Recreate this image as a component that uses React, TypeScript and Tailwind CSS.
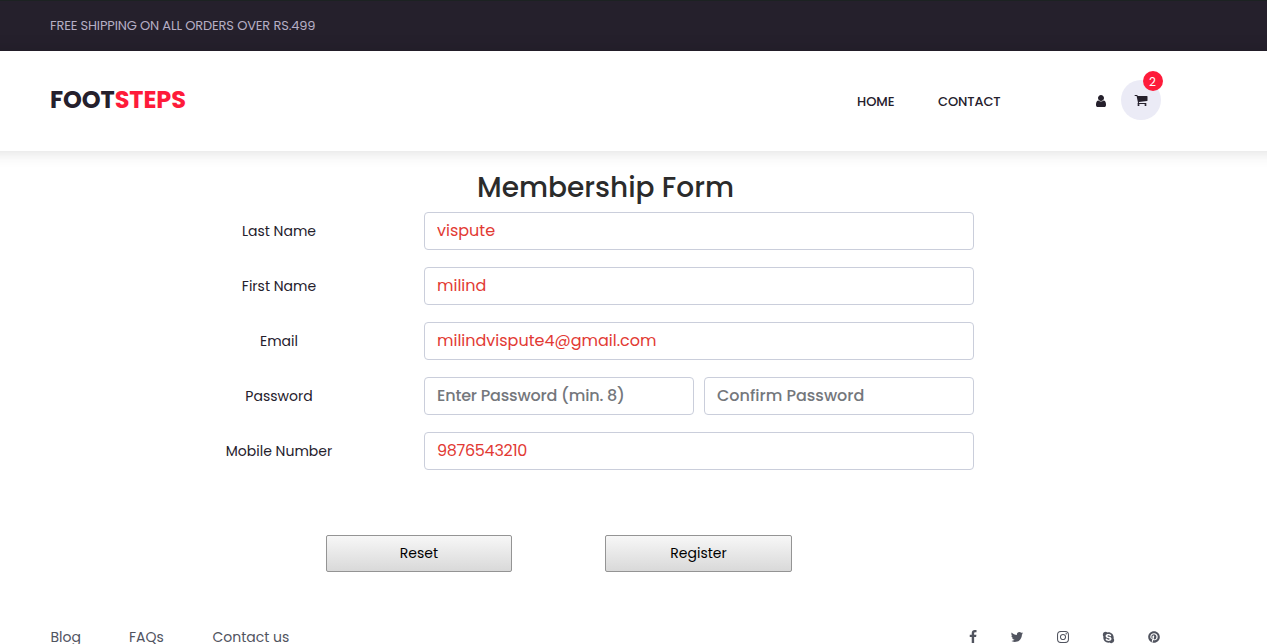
import React from "react";
import { FaPinterest, FaSkype } from "react-icons/fa";

type GlyphProps = { d: string; box?: string; className: string };

function Glyph({ d, box = "0 0 1792 1792", className }: GlyphProps) {
  return (
    <svg viewBox={box} fill="currentColor" className={className} aria-hidden="true">
      <path d={d} />
    </svg>
  );
}

const USER =
  "M1280 1399q0 109-62.5 187t-150.5 78h-854q-88 0-150.5-78t-62.5-187q0-85 8.5-160.5t31.5-152 58.5-131 94-89 134.5-34.5q131 128 313 128t313-128q76 0 134.5 34.5t94 89 58.5 131 31.5 152 8.5 160.5zm-256-887q0 159-112.5 271.5t-271.5 112.5-271.5-112.5-112.5-271.5 112.5-271.5 271.5-112.5 271.5 112.5 112.5 271.5z";
const CART =
  "M704 1536q0 52-38 90t-90 38-90-38-38-90 38-90 90-38 90 38 38 90zm896 0q0 52-38 90t-90 38-90-38-38-90 38-90 90-38 90 38 38 90zm128-1088v512q0 24-16.5 42.5t-40.5 21.5l-1044 122q13 60 13 70 0 16-24 64h920q26 0 45 19t19 45-19 45-45 19h-1024q-26 0-45-19t-19-45q0-11 8-31.5t16-36 21.5-40 15.5-29.5l-177-823h-204q-26 0-45-19t-19-45 19-45 45-19h256q16 0 28.5 6.5t19.5 15.5 13 24.5 8 26 5.5 29.5 4.5 26h1201q26 0 45 19t19 45z";
const FACEBOOK =
  "M1343 12v264h-157q-86 0-116 36t-30 108v189h293l-39 296h-254v759h-306v-759h-255v-296h255v-218q0-186 104-288.5t277-102.5q147 0 228 12z";
const TWITTER =
  "M1684 408q-67 98-162 167 1 14 1 42 0 130-38 259.5t-115.5 248.5-184.5 210.5-258 146-323 54.5q-271 0-496-145 35 4 78 4 225 0 401-138-105-2-188-64.5t-114-159.5q33 5 61 5 43 0 85-11-112-23-185.5-111.5t-73.5-205.5v-4q68 38 146 41-66-44-105-115t-39-154q0-88 44-163 121 149 294.5 238.5t371.5 99.5q-8-38-8-74 0-134 94.5-228.5t228.5-94.5q140 0 236 102 109-21 205-78-37 115-142 178 93-10 186-50z";
const INSTAGRAM =
  "M1152 896q0-106-75-181t-181-75-181 75-75 181 75 181 181 75 181-75 75-181zm138 0q0 164-115 279t-279 115-279-115-115-279 115-279 279-115 279 115 115 279zm108-410q0 38-27 65t-65 27-65-27-27-65 27-65 65-27 65 27 27 65zm-502-220q-7 0-76.5-.5t-105.5 0-96.5 3-103 10-71.5 18.5q-50 20-88 58t-58 88q-11 29-18.5 71.5t-10 103-3 96.5 0 105.5.5 76.5-.5 76.5 0 105.5 3 96.5 10 103 18.5 71.5q20 50 58 88t88 58q29 11 71.5 18.5t103 10 96.5 3 105.5 0 76.5-.5 76.5.5 105.5 0 96.5-3 103-10 71.5-18.5q50-20 88-58t58-88q11-29 18.5-71.5t10-103 3-96.5 0-105.5-.5-76.5.5-76.5 0-105.5-3-96.5-10-103-18.5-71.5q-20-50-58-88t-88-58q-29-11-71.5-18.5t-103-10-96.5-3-105.5 0-76.5.5zm768 630q0 229-5 317-10 208-124 322t-322 124q-88 5-317 5t-317-5q-208-10-322-124t-124-322q-5-88-5-317t5-317q10-208 124-322t322-124q88-5 317-5t317 5q208 10 322 124t124 322q5 88 5 317z";

const INPUT =
  "h-[38px] min-w-0 flex-1 rounded border border-[#cacedb] bg-white px-3 pb-[2px] text-base text-[#e23a34] outline-none placeholder:font-medium placeholder:text-[#74777c] placeholder:opacity-100";

type Field = { value?: string; placeholder?: string; type?: string; tracking?: string };
type Row = { label: string; fields: Field[] };

const ROWS: Row[] = [
  { label: "Last Name", fields: [{ value: "vispute" }] },
  { label: "First Name", fields: [{ value: "milind" }] },
  { label: "Email", fields: [{ value: "milindvispute4@gmail.com" }] },
  {
    label: "Password",
    fields: [
      { placeholder: "Enter Password (min. 8)", type: "password", tracking: "tracking-[-0.19px]" },
      { placeholder: "Confirm Password", type: "password" },
    ],
  },
  { label: "Mobile Number", fields: [{ value: "9876543210", tracking: "tracking-[-0.3px]" }] },
];

const BUTTON =
  "h-[37px] rounded-[2px] border border-[#949494] bg-linear-to-b from-[#f7f7f7] to-[#d9d9d9] pb-[2px] text-sm text-black";

export default function App() {
  return (
    <div className="h-[644px] overflow-hidden bg-white font-['Poppins','Inter',sans-serif]">
      <div className="flex h-[51px] items-center border-t border-[#1c2222] bg-[#25202c] pb-px pl-[50px] text-[13px] tracking-[-0.15px] text-[#b5aec4]">
        FREE SHIPPING ON ALL ORDERS OVER RS.499
      </div>

      <header className="-mx-5 flex h-[100px] items-center bg-white pr-[126px] pl-[70px] text-[#25202c] shadow-[0_0_16px_rgba(0,0,0,0.15)]">
        <a href="#" className="pb-[3px] text-2xl leading-8 font-bold tracking-[-0.1px]">
          FOOT<span className="text-[#fe1b3a]">STEPS</span>
        </a>
        <nav className="ml-auto flex pt-px text-[13px] font-medium">
          <a href="#" className="w-[81px]">HOME</a>
          <a href="#" className="w-[158px] tracking-[-0.12px]">CONTACT</a>
        </nav>
        <a href="#" aria-label="Account" className="mr-[15px]">
          <Glyph d={USER} box="0 0 1280 1792" className="h-[14px] w-[10px]" />
        </a>
        <a href="#" aria-label="Cart" className="relative mb-[2px] flex h-10 w-10 items-center justify-center rounded-full bg-[#ebebf6]">
          <Glyph d={CART} className="mr-px h-[14px] w-[14px]" />
          <span className="absolute -top-[9px] -right-[2px] flex h-5 w-5 items-center justify-center rounded-full bg-[#fe1b3a] pt-px pr-px text-xs text-white">
            2
          </span>
        </a>
      </header>

      <main className="pt-[20px]">
        <h1 className="pl-[477px] text-[28px] leading-[34px] font-medium text-[#2b2b2b]">
          Membership Form
        </h1>
        <form className="mt-[7px]">
          <div className="flex flex-col gap-[17px] pl-[144px]">
            {ROWS.map((row) => (
              <div key={row.label} className="flex w-[830px] items-center gap-[10px]">
                <label className="w-[270px] text-center text-sm text-[#25202c]">{row.label}</label>
                {row.fields.map((f, i) => (
                  <input
                    key={i}
                    type={f.type ?? "text"}
                    defaultValue={f.value}
                    placeholder={f.placeholder}
                    className={`${INPUT} ${f.tracking ?? ""}`}
                  />
                ))}
              </div>
            ))}
          </div>
          <div className="mt-[65px] flex gap-[93px] pl-[326px]">
            <button type="reset" className={`w-[186px] ${BUTTON}`}>Reset</button>
            <button type="button" className={`w-[187px] ${BUTTON}`}>Register</button>
          </div>
        </form>
      </main>

      <footer className="mt-[55px] flex h-5 items-center pr-[107px] pl-[50.5px] text-sm text-[#51545f]">
        <a href="#" className="w-[78.5px]">Blog</a>
        <a href="#" className="w-[83.5px]">FAQs</a>
        <a href="#">Contact us</a>
        <div className="ml-auto flex items-center">
          <Glyph d={FACEBOOK} box="384 0 1024 1792" className="mr-[33px] h-[14px] w-2" />
          <Glyph d={TWITTER} className="mr-[33px] h-[14px] w-[14px]" />
          <Glyph d={INSTAGRAM} box="128 128 1536 1536" className="mr-[33px] h-3 w-3" />
          <FaSkype className="mr-[33px] h-[13px] w-[13px]" />
          <FaPinterest className="h-3 w-3" />
        </div>
      </footer>
    </div>
  );
}
